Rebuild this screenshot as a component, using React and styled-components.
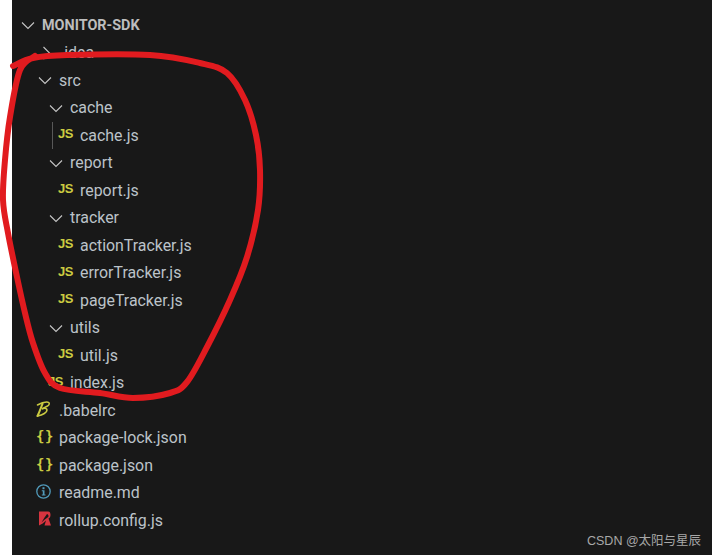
import styled, { createGlobalStyle } from "styled-components";

const GlobalStyle = createGlobalStyle`
  html, body { margin: 0; padding: 0; background: #fff; }
  body { width: 712px; height: 555px; overflow: hidden; }
`;

const Page = styled.div`
  position: relative;
  width: 712px;
  height: 555px;
  padding-left: 12px;
  box-sizing: border-box;
  background: #fff;
`;

const Panel = styled.div`
  height: 100%;
  padding-top: 11.5px;
  box-sizing: border-box;
  background: #181818;
  font-family: Roboto, "Open Sans", sans-serif;
`;

const Row = styled.div`
  display: flex;
  align-items: center;
  height: 27.5px;
  padding-left: ${(p) => p.$label - 34}px;
  font-size: ${(p) => (p.$root ? "14.4px" : "15.9px")};
  font-weight: ${(p) => (p.$root ? 700 : 400)};
  color: ${(p) => (p.$root ? "#bdbdbd" : "#bcc3c9")};
  white-space: nowrap;
`;

const Slot = styled.span`
  flex: none;
  display: flex;
  align-items: center;
  width: 22px;
  height: 100%;
  position: relative;
`;

const Guide = styled.span`
  position: absolute;
  left: -6px;
  top: 0;
  bottom: 0;
  width: 1px;
  background: #585858;
`;

const Js = styled.span`
  font-family: "Liberation Sans", sans-serif;
  font-weight: 700;
  font-size: 13px;
  letter-spacing: -0.6px;
  color: #cbcb41;
  margin-top: -3px;
`;

const Braces = styled.span`
  font-family: "DejaVu Sans Mono", monospace;
  font-weight: 700;
  font-size: 14px;
  color: #cbcb41;
  margin-top: -3px;
  margin-left: -1px;
  letter-spacing: 0.5px;
`;

const Watermark = styled.div`
  position: absolute;
  left: 587px;
  top: 533px;
  font-family: "Liberation Sans", "Noto Sans CJK SC", sans-serif;
  font-size: 12.5px;
  line-height: 16px;
  color: #a8a8a8;
  white-space: nowrap;
`;

const Scribble = styled.svg`
  position: absolute;
  left: 0;
  top: 0;
  pointer-events: none;
`;

const ChevronIcon = styled.svg`
  margin-left: 1px;
`;

const FileGlyph = styled.svg`
  margin-top: -3px;
  margin-left: ${(p) => p.$left || 0}px;
`;

const Chevron = ({ open }) => (
  <ChevronIcon width="14" height="14" viewBox="0 0 14 14" fill="none" stroke="#c5c5c5" strokeWidth="1.1">
    {open ? <path d="M1 4.5 7 10.5l6-6" /> : <path d="M4.5 1 10.5 7l-6 6" />}
  </ChevronIcon>
);

const Babel = () => (
  <FileGlyph $left={-1} width="15" height="16" viewBox="0 0 15 16" fill="none" stroke="#cbcb41" strokeLinecap="round">
    <path d="M1.5 4C5 2 9 .8 12 1.2c2 .4 1.5 2.5-.5 3.8L6.5 7.6" strokeWidth="1.5" />
    <path d="M6.5 7.6c2.5-.6 4.5-.3 4.5 1.4 0 2.4-4 5-9.5 6" strokeWidth="1.6" />
    <path d="M6.5 2.8C5 6.5 3.5 10.5 1.5 15" strokeWidth="2" />
  </FileGlyph>
);

const Info = () => (
  <FileGlyph $left={-1} width="15" height="15" viewBox="0 0 15 15" fill="none">
    <circle cx="7.5" cy="7.5" r="6.7" stroke="#519aba" strokeWidth="1.3" />
    <rect x="6.5" y="3.2" width="2" height="2" fill="#519aba" />
    <path d="M5.8 6.2H8.5v4.3h1v1H5.8v-1h1V7.2h-1z" fill="#519aba" />
  </FileGlyph>
);

const Rollup = () => (
  <FileGlyph $left={2} width="12" height="15" viewBox="0 0 12 15">
    <path
      d="M0 .5h9C11 .5 11.5 2.3 11.5 4c0 1.7-.8 3-2 3.5L12 14.5H5.5L7 9.5C5 11.5 2.5 13.5 0 14.5z"
      fill="#d6343f"
    />
    <path d="M8 3C6.2 5.6 4.2 8.5 2.5 11.5 4.6 9.5 7 7.5 9.3 6 9.9 5 9.3 3.5 8 3z" fill="#181818" />
  </FileGlyph>
);

const rows = [
  { name: "MONITOR-SDK", label: 42, type: "open", root: true },
  { name: ".idea", label: 60, type: "closed" },
  { name: "src", label: 59, type: "open" },
  { name: "cache", label: 70, type: "open" },
  { name: "cache.js", label: 80, type: "js", guide: true },
  { name: "report", label: 70, type: "open" },
  { name: "report.js", label: 80, type: "js" },
  { name: "tracker", label: 70, type: "open" },
  { name: "actionTracker.js", label: 80, type: "js" },
  { name: "errorTracker.js", label: 80, type: "js" },
  { name: "pageTracker.js", label: 80, type: "js" },
  { name: "utils", label: 70, type: "open" },
  { name: "util.js", label: 80, type: "js" },
  { name: "index.js", label: 70, type: "js" },
  { name: ".babelrc", label: 59, type: "babel" },
  { name: "package-lock.json", label: 59, type: "json" },
  { name: "package.json", label: 59, type: "json" },
  { name: "readme.md", label: 59, type: "info" },
  { name: "rollup.config.js", label: 59, type: "rollup" },
];

// hand-drawn ring, traced from the picture
const ring = [
  [13, 66], [33, 58], [67, 55], [150, 55], [200, 63], [227, 73], [245, 100], [256, 135], [260, 170],
  [258, 210], [247, 257], [230, 300], [207, 347], [187, 382], [170, 393], [133, 398], [100, 393],
  [60, 388], [45, 373], [33, 343], [25, 313], [17, 277], [8, 233], [3, 200], [5, 160], [10, 117],
  [20, 70], [35, 56],
];

function smoothPath(pts) {
  let d = `M${pts[0][0]} ${pts[0][1]}`;
  for (let i = 0; i < pts.length - 1; i++) {
    const a = pts[Math.max(i - 1, 0)];
    const b = pts[i];
    const c = pts[i + 1];
    const e = pts[Math.min(i + 2, pts.length - 1)];
    d += ` C${b[0] + (c[0] - a[0]) / 6} ${b[1] + (c[1] - a[1]) / 6} ${c[0] - (e[0] - b[0]) / 6} ${c[1] - (e[1] - b[1]) / 6} ${c[0]} ${c[1]}`;
  }
  return d;
}

function RowIcon({ type, guide }) {
  return (
    <Slot>
      {guide && <Guide />}
      {type === "open" && <Chevron open />}
      {type === "closed" && <Chevron />}
      {type === "js" && <Js>JS</Js>}
      {type === "json" && <Braces>{"{}"}</Braces>}
      {type === "babel" && <Babel />}
      {type === "info" && <Info />}
      {type === "rollup" && <Rollup />}
    </Slot>
  );
}

export default function App() {
  return (
    <Page>
      <GlobalStyle />
      <Panel>
        {rows.map((row) => (
          <Row key={row.name} $label={row.label} $root={row.root}>
            <RowIcon type={row.type} guide={row.guide} />
            {row.name}
          </Row>
        ))}
      </Panel>
      <Scribble width="712" height="555" viewBox="0 0 712 555" fill="none">
        <path d={smoothPath(ring)} stroke="#e11b1f" strokeWidth="6" strokeLinecap="round" strokeLinejoin="round" />
      </Scribble>
      <Watermark>CSDN @太阳与星辰</Watermark>
    </Page>
  );
}
